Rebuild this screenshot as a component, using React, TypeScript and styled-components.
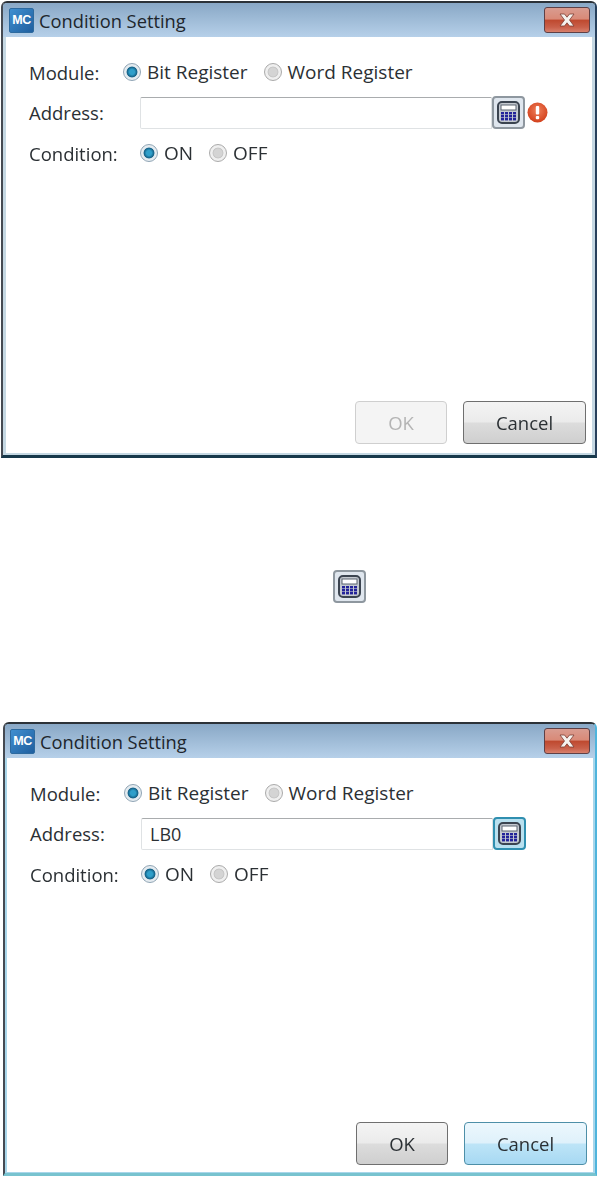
import React from 'react';
import styled, { createGlobalStyle } from 'styled-components';

const Global = createGlobalStyle`
  html, body {
    margin: 0;
    padding: 0;
    background: #fff;
  }
  body {
    font-family: "Open Sans", "Noto Sans", "Liberation Sans", sans-serif;
    color: #2b3034;
  }
`;

const Page = styled.div`
  width: 600px;
  height: 1178px;
  display: flex;
  flex-direction: column;
  overflow: hidden;
  filter: blur(0.35px);
`;

const Frame = styled.div<{ $active?: boolean; $shift: number }>`
  box-sizing: border-box;
  width: ${(p) => 597 - p.$shift}px;
  height: ${(p) => (p.$active ? 454 : 457)}px;
  flex: none;
  margin-left: ${(p) => p.$shift}px;
  margin-top: ${(p) => (p.$active ? 0 : 1)}px;
  display: flex;
  flex-direction: column;
  border-radius: 6px 6px 0 0;
  border-top: 2px solid #2c3238;
  border-left: 2px solid #454a52;
  border-right: 2px solid ${(p) => (p.$active ? '#4fb4dc' : '#27405c')};
  border-bottom: 3px solid ${(p) => (p.$active ? '#78c3cf' : '#17384a')};
  background: ${(p) => (p.$active ? '#a9d6ea' : '#c5d8e3')};
`;

const TitleBar = styled.div<{ $active?: boolean }>`
  height: 34px;
  flex: none;
  display: flex;
  align-items: center;
  padding: 0 5px 0 ${(p) => (p.$active ? 5 : 6)}px;
  background: linear-gradient(#89a8c6, #b6d0e9);
  border-radius: 4px 4px 0 0;
`;

const Logo = styled.div`
  width: 25px;
  height: 25px;
  flex: none;
  display: flex;
  align-items: center;
  justify-content: center;
  background: linear-gradient(135deg, #3f8fd0, #1f5f9f);
  border: 1px solid #2d6a9f;
  box-sizing: border-box;
  border-radius: 2px;
  color: #fff;
  font: 700 12.5px "Liberation Sans", sans-serif;
  letter-spacing: -0.5px;
`;

const Title = styled.div`
  margin-left: 5px;
  font-size: 18.3px;
  color: #20262c;
`;

const CloseButton = styled.div`
  margin-left: auto;
  width: 46px;
  height: 26px;
  box-sizing: border-box;
  display: flex;
  align-items: center;
  justify-content: center;
  border: 1px solid #5e4046;
  border-radius: 3px;
  background: linear-gradient(#d99c90 0%, #d98a78 45%, #bf4a30 52%, #c9604a 80%, #d8806c 100%);
`;

const Body = styled.div<{ $active?: boolean }>`
  flex: 1;
  display: flex;
  flex-direction: column;
  background: #fff;
  margin: ${(p) => (p.$active ? '0 2px 1px 2px' : '0 3px 2px 3px')};
  padding: 20px 6px ${(p) => (p.$active ? 7 : 9)}px 23px;
`;

const Row = styled.div<{ $gap: number }>`
  display: flex;
  align-items: center;
  min-height: 30px;
  margin-bottom: ${(p) => p.$gap}px;
`;

const Label = styled.div<{ $width: number }>`
  width: ${(p) => p.$width}px;
  flex: none;
  font-size: 18.5px;
`;

const RadioItem = styled.div`
  display: flex;
  align-items: center;
  gap: 6px;
  margin-right: 16px;
  font-size: 19px;
`;

const RadioDot = styled.span<{ $on?: boolean }>`
  box-sizing: border-box;
  width: 18px;
  height: 18px;
  border-radius: 50%;
  flex: none;
  border: 1px solid ${(p) => (p.$on ? '#8fa4b4' : '#aaaaaa')};
  background: ${(p) =>
    p.$on
      ? 'radial-gradient(circle at 50% 50%, #2f9fca 0 2.500px, #135f85 5px, #dfe8ee 5.800px, #e9eef2 8px)'
      : 'radial-gradient(circle at 50% 50%, #d4d4d4 0 4px, #c4c4c4 5px, #f0f0f0 5.800px, #eeeeee 8px)'};
`;

const Field = styled.div`
  box-sizing: border-box;
  width: 352px;
  height: 32px;
  flex: none;
  display: flex;
  align-items: center;
  padding-left: 8px;
  border: 1px solid #dfe2e4;
  border-top-color: #a9acae;
  border-radius: 2px 0 0 2px;
  font-size: 18px;
`;

const CalcFrame = styled.div<{ $active?: boolean }>`
  box-sizing: border-box;
  width: 33px;
  height: 33px;
  flex: none;
  display: flex;
  align-items: center;
  justify-content: center;
  border-radius: 4px;
  border: 2px solid ${(p) => (p.$active ? '#2f8fb0' : '#8e979f')};
  background: ${(p) => (p.$active ? '#b9e0ef' : '#dfe6ee')};
`;

const AlertWrap = styled.div`
  margin-left: 2px;
  display: flex;
`;

const Footer = styled.div`
  margin-top: auto;
  display: flex;
  justify-content: flex-end;
  gap: 16px;
`;

const DialogButton = styled.div<{ $wide?: boolean; $state?: 'disabled' | 'hover' }>`
  box-sizing: border-box;
  width: ${(p) => (p.$wide ? 123 : 92)}px;
  height: 43px;
  display: flex;
  align-items: center;
  justify-content: center;
  font-size: 18.5px;
  border-radius: 4px;
  border: 1px solid ${(p) => (p.$state === 'disabled' ? '#cfcfcf' : p.$state === 'hover' ? '#4d8fa8' : '#6f6f6f')};
  color: ${(p) => (p.$state === 'disabled' ? '#b4b4b4' : '#2b3034')};
  background: ${(p) =>
    p.$state === 'disabled'
      ? '#f4f4f4'
      : p.$state === 'hover'
        ? 'linear-gradient(#ecf7fd 0%, #dff1fb 48%, #bde4f7 52%, #a7d9f3 100%)'
        : 'linear-gradient(#f4f4f4 0%, #ebebeb 48%, #dcdcdc 52%, #cfcfcf 100%)'};
`;

const IconRow = styled.div`
  height: 264px;
  flex: none;
  display: flex;
  align-items: flex-start;
  padding: 112px 0 0 333px;
  box-sizing: border-box;
`;

const CalcIcon = () => (
  <svg width="23" height="23" viewBox="0 0 23 23">
    <rect x="1" y="1" width="21" height="21" rx="4" fill="#c4c9d0" stroke="#3b4450" strokeWidth="2" />
    <rect x="4" y="4" width="15" height="5" fill="#fff" stroke="#5a6470" strokeWidth="1" />
    {[11, 14, 17].map((y) =>
      [4, 8, 12, 16].map((x) => <rect key={`${x}-${y}`} x={x} y={y} width="3" height="2.4" fill="#23239a" />),
    )}
  </svg>
);

const AlertIcon = () => (
  <svg width="21" height="21" viewBox="0 0 21 21">
    <defs>
      <radialGradient id="alertFill" cx="50%" cy="40%" r="60%">
        <stop offset="0%" stopColor="#f0805a" />
        <stop offset="100%" stopColor="#d2401c" />
      </radialGradient>
    </defs>
    <circle cx="10.5" cy="10.5" r="10" fill="url(#alertFill)" />
    <rect x="8.8" y="4" width="3.4" height="8.5" rx="1" fill="#fff" />
    <rect x="8.8" y="14" width="3.4" height="3.2" rx="1" fill="#fff" />
  </svg>
);

const CloseIcon = () => (
  <svg width="20" height="14" viewBox="0 0 20 14">
    <path d="M3 1h4.5L10 4.2 12.500 1H17l-4.500 6L17 13h-4.500L10 9.800 7.500 13H3l4.500-6z" fill="#f5f2ee" stroke="#7a3c34" strokeWidth="0.8" />
  </svg>
);

interface DialogProps {
  shift: number;
  active?: boolean;
  address?: string;
  showAlert?: boolean;
}

const Dialog = ({ shift, active, address, showAlert }: DialogProps) => (
  <Frame $shift={shift} $active={active}>
    <TitleBar $active={active}>
      <Logo>MC</Logo>
      <Title>Condition Setting</Title>
      <CloseButton>
        <CloseIcon />
      </CloseButton>
    </TitleBar>
    <Body $active={active}>
      <Row $gap={9}>
        <Label $width={94}>Module:</Label>
        <RadioItem>
          <RadioDot $on />
          Bit Register
        </RadioItem>
        <RadioItem>
          <RadioDot />
          Word Register
        </RadioItem>
      </Row>
      <Row $gap={9}>
        <Label $width={111}>Address:</Label>
        <Field>{address}</Field>
        <CalcFrame $active={active}>
          <CalcIcon />
        </CalcFrame>
        {showAlert && (
          <AlertWrap>
            <AlertIcon />
          </AlertWrap>
        )}
      </Row>
      <Row $gap={0}>
        <Label $width={111}>Condition:</Label>
        <RadioItem>
          <RadioDot $on />
          ON
        </RadioItem>
        <RadioItem>
          <RadioDot />
          OFF
        </RadioItem>
      </Row>
      <Footer>
        <DialogButton $state={active ? undefined : 'disabled'}>OK</DialogButton>
        <DialogButton $wide $state={active ? 'hover' : undefined}>Cancel</DialogButton>
      </Footer>
    </Body>
  </Frame>
);

export default function App() {
  return (
    <Page>
      <Global />
      <Dialog shift={1} showAlert />
      <IconRow>
        <CalcFrame>
          <CalcIcon />
        </CalcFrame>
      </IconRow>
      <Dialog shift={3} active address="LB0" />
    </Page>
  );
}
